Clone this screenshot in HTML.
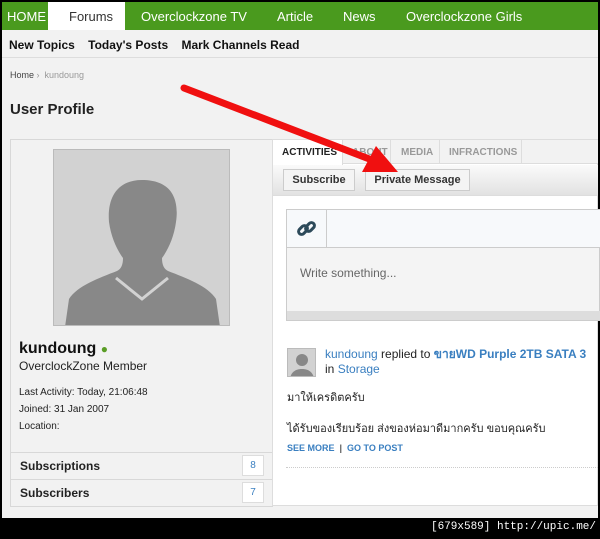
<!DOCTYPE html><html><head><style>
*{margin:0;padding:0;box-sizing:border-box}
body{width:600px;height:539px;background:#000;position:relative;overflow:hidden;font-family:"Liberation Sans","Noto Sans CJK SC",sans-serif}
.a{position:absolute}
</style></head><body>
<div class="a" style="left:2px;top:2px;width:596px;height:516px;background:#f2f2f2"></div>
<div class="a" style="left:2px;top:2px;width:596px;height:28px;background:#4a9a1e"></div>
<div class="a" style="left:48px;top:2px;width:77px;height:28px;background:#fff"></div>
<div class="a" style="top:9px;left:7px;font-size:13px;color:#fff;white-space:nowrap">HOME</div>
<div class="a" style="top:9px;left:69px;font-size:13px;color:#333">Forums</div>
<div class="a" style="top:9px;left:141px;font-size:13px;color:#fff;white-space:nowrap">Overclockzone TV</div>
<div class="a" style="top:9px;left:277px;font-size:13px;color:#fff">Article</div>
<div class="a" style="top:9px;left:343px;font-size:13px;color:#fff">News</div>
<div class="a" style="top:9px;left:406px;font-size:13px;color:#fff;white-space:nowrap">Overclockzone Girls</div>
<div class="a" style="left:2px;top:57px;width:596px;height:1px;background:#ddd"></div>
<div class="a" style="top:38px;left:9px;font-size:12px;font-weight:bold;color:#111;white-space:nowrap">New Topics&nbsp;&nbsp;&nbsp; Today's Posts&nbsp;&nbsp;&nbsp; Mark Channels Read</div>
<div class="a" style="top:70px;left:10px;font-size:9px;color:#444">Home <span style="color:#999">›&nbsp; kundoung</span></div>
<div class="a" style="top:101px;left:10px;font-size:15px;font-weight:bold;color:#222">User Profile</div>
<div class="a" style="left:10px;top:139px;width:263px;height:368px;border:1px solid #d8d8d8;background:#f2f2f2"></div>
<div class="a" style="left:53px;top:149px;width:177px;height:177px;background:#d2d2d2;border:1px solid #bbb;overflow:hidden">
<svg width="177" height="177" viewBox="0 0 177 177"><path d="M88 30c-25 0-35 18-33 42 2 15 8 28 14 36 0 7-2 11-6 13-18 7-40 15-48 28l-4 28h155l-4-28c-8-13-30-21-48-28-4-2-6-6-6-13 6-8 12-21 14-36 3-20-2-42-34-42z" fill="#888"/><path d="M62 128l26 21 26-21" fill="none" stroke="#d2d2d2" stroke-width="3"/></svg></div>
<div class="a" style="top:340px;left:19px;font-size:16px;font-weight:bold;color:#111">kundoung <span style="color:#5a9d26;font-size:12px">●</span></div>
<div class="a" style="top:359px;left:19px;font-size:12px;color:#222">OverclockZone Member</div>
<div class="a" style="top:384px;left:19px;font-size:10px;color:#222;line-height:17px">Last Activity: Today, 21:06:48<br>Joined: 31 Jan 2007<br>Location:</div>
<div class="a" style="left:10px;top:452px;width:263px;height:1px;background:#d8d8d8"></div>
<div class="a" style="left:10px;top:479px;width:263px;height:1px;background:#d8d8d8"></div>
<div class="a" style="top:459px;left:20px;font-size:12px;font-weight:bold;color:#222">Subscriptions</div>
<div class="a" style="top:486px;left:20px;font-size:12px;font-weight:bold;color:#222">Subscribers</div>
<div class="a" style="left:242px;top:455px;width:22px;height:21px;background:#fff;border:1px solid #ddd;font-size:10px;color:#3a7fc0;text-align:center;line-height:19px">8</div>
<div class="a" style="left:242px;top:482px;width:22px;height:21px;background:#fff;border:1px solid #ddd;font-size:10px;color:#3a7fc0;text-align:center;line-height:19px">7</div>
<div class="a" style="left:272px;top:139px;width:326px;height:367px;background:#fff;border:1px solid #ddd"></div>
<div class="a" style="left:273px;top:140px;width:325px;height:24px;background:#f2f2f2;border-bottom:1px solid #ddd"></div>
<div class="a" style="left:273px;top:140px;width:70px;height:25px;background:#fff;border-right:1px solid #ddd"></div>
<div class="a" style="left:390px;top:140px;width:1px;height:24px;background:#ddd"></div>
<div class="a" style="left:439px;top:140px;width:1px;height:24px;background:#ddd"></div>
<div class="a" style="left:521px;top:140px;width:1px;height:24px;background:#ddd"></div>
<div class="a" style="top:147px;left:282px;font-size:10px;font-weight:bold;color:#222">ACTIVITIES</div>
<div class="a" style="top:147px;left:352px;font-size:10px;font-weight:bold;color:#999">ABOUT</div>
<div class="a" style="top:147px;left:401px;font-size:10px;font-weight:bold;color:#999">MEDIA</div>
<div class="a" style="top:147px;left:449px;font-size:10px;font-weight:bold;color:#999">INFRACTIONS</div>
<div class="a" style="left:273px;top:165px;width:325px;height:31px;background:linear-gradient(#fafafa,#e2e2e2);border-bottom:1px solid #ddd"></div>
<div class="a" style="left:283px;top:169px;width:72px;height:22px;background:#f4f4f4;border:1px solid #ccc;font-size:11px;font-weight:bold;color:#333;text-align:center;line-height:20px">Subscribe</div>
<div class="a" style="left:365px;top:169px;width:105px;height:22px;background:#f4f4f4;border:1px solid #ccc;font-size:11px;font-weight:bold;color:#333;text-align:center;line-height:20px">Private Message</div>
<div class="a" style="left:286px;top:209px;width:314px;height:112px;background:#f4f4f4;border:1px solid #ccc"></div>
<div class="a" style="left:287px;top:210px;width:313px;height:38px;background:#f7f9fb;border-bottom:1px solid #ccc"></div>
<div class="a" style="left:326px;top:210px;width:1px;height:38px;background:#ccc"></div>
<div class="a" style="left:287px;top:311px;width:313px;height:9px;background:#ddd"></div>
<svg class="a" style="left:296px;top:219px" width="22" height="20" viewBox="0 0 22 20"><g fill="none" stroke="#2d4a5a" stroke-width="3"><rect x="2" y="8" width="10" height="6" rx="3" transform="rotate(-45 7 11)"/><rect x="9" y="5" width="10" height="6" rx="3" transform="rotate(-45 14 8)"/></g></svg>
<div class="a" style="top:266px;left:300px;font-size:12px;color:#666">Write something...</div>
<div class="a" style="left:287px;top:348px;width:29px;height:29px;background:#d2d2d2;border:1px solid #bbb;overflow:hidden"><svg width="29" height="29"><circle cx="14" cy="11" r="6" fill="#888"/><path d="M2 29c2-8 8-9 12-9s10 1 12 9z" fill="#888"/></svg></div>
<div class="a" style="top:347px;left:325px;font-size:12px;color:#222;white-space:nowrap;line-height:15px"><span style="color:#3a7fc0">kundoung</span> replied to <b style="color:#3a7fc0">ขายWD Purple 2TB SATA 3</b><br>in <span style="color:#3a7fc0">Storage</span></div>
<div class="a" style="top:388px;left:287px;font-size:11px;color:#222">มาให้เครดิตครับ</div>
<div class="a" style="top:419px;left:287px;font-size:11px;color:#222;white-space:nowrap">ได้รับของเรียบร้อย ส่งของห่อมาดีมากครับ ขอบคุณครับ</div>
<div class="a" style="top:443px;left:287px;font-size:9px;font-weight:bold;color:#3a7fc0">SEE MORE <span style="color:#555">&nbsp;|&nbsp;</span> GO TO POST</div>
<div class="a" style="left:286px;top:467px;width:312px;border-top:1px dotted #ccc"></div>
<svg class="a" style="left:0;top:0" width="600" height="539"><line x1="184" y1="88" x2="372" y2="160" stroke="#f01010" stroke-width="7" stroke-linecap="round"/><polygon points="398,172 362,172 376,146" fill="#f01010"/></svg>
<div class="a" style="top:521px;right:4px;font-size:11px;color:#fff;font-family:'Liberation Mono',monospace">[679x589] http://upic.me/</div>
</body></html>
